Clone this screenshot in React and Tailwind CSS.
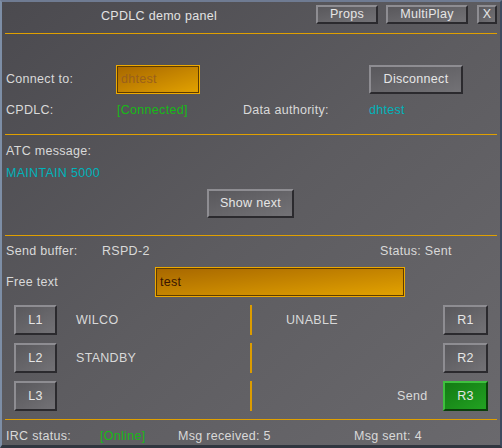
import React from 'react';

const font = { fontFamily: '"Liberation Sans", Arial, sans-serif' };

function Btn({ children, className = '', green = false }) {
  const look = green
    ? 'bg-linear-to-br from-[#137a13] to-[#22a322] border-t-[#3fc03f] border-l-[#3fc03f] border-b-[#0b3f0b] border-r-[#0b3f0b]'
    : 'bg-linear-to-br from-[#59585c] to-[#737276] border-t-[#8e8d92] border-l-[#8e8d92] border-b-[#2b2a2e] border-r-[#2b2a2e]';
  return (
    <div className={`flex items-center justify-center border-2 text-[#e6e6e6] ${look} ${className}`}>
      {children}
    </div>
  );
}

function OrangeField({ children, className = '', textClass = '' }) {
  return (
    <div className={`border border-[#eeaa00] ${className}`}>
      <div className={`h-full w-full flex items-center px-[3px] border border-[#5e3c00] bg-linear-to-br from-[#a86800] to-[#e2a200] ${textClass}`}>
        {children}
      </div>
    </div>
  );
}

function Line() {
  return <div className="h-px ml-[3px] mr-[3px] bg-[#e0a000]" />;
}

function VBar() {
  return <div className="w-[2px] h-[30px] bg-[#dc9c00]" />;
}

export default function App() {
  return (
    <div
      style={font}
      className="w-[502px] h-[448px] overflow-hidden text-[12.5px] tracking-[0.3px] text-[#d9d9d9] border-t-2 border-l-2 border-r-2 border-b-[3px] border-t-[#6f7b92] border-l-[#7d8ea6] border-r-[#3e4a5e] border-b-[#30363f] bg-linear-to-br from-[#4b4a4f] via-[#5d5c60] to-[#6a696d] flex flex-col"
    >
      {/* title bar */}
      <div className="h-[31px] flex items-start">
        <div className="w-[314px] pl-[99px] h-[28px] flex items-center text-[#e2e2e2]">CPDLC demo panel</div>
        <Btn className="mt-[3px] w-[62px] h-[19px]">Props</Btn>
        <Btn className="mt-[3px] ml-[8px] w-[82px] h-[19px]">MultiPlay</Btn>
        <Btn className="mt-[3px] ml-[9px] w-[20px] h-[19px]">X</Btn>
      </div>
      <Line />

      {/* connection */}
      <div className="mt-[31px] h-[29px] flex items-center pl-[4px]">
        <span className="w-[110px]">Connect to:</span>
        <OrangeField className="w-[84px] h-[29px]" textClass="text-[#9a601c]">dhtest</OrangeField>
        <Btn className="ml-[169px] w-[94px] h-[29px]">Disconnect</Btn>
      </div>
      <div className="mt-[9px] h-[14px] flex items-center pl-[4px]">
        <span className="w-[111px]">CPDLC:</span>
        <span className="w-[126px] text-[#17b917]">[Connected]</span>
        <span className="w-[126px]">Data authority:</span>
        <span className="text-[#00b3bb]">dhtest</span>
      </div>
      <div className="mt-[17px]">
        <Line />
      </div>

      {/* atc message */}
      <div className="mt-[9px] h-[14px] flex items-center pl-[4px]">ATC message:</div>
      <div className="mt-[8px] h-[14px] flex items-center pl-[4px] text-[#00b3bb]">MAINTAIN 5000</div>
      <div className="mt-[9px] h-[29px] flex pl-[205px]">
        <Btn className="w-[87px] h-[29px]">Show next</Btn>
      </div>
      <div className="mt-[17px]">
        <Line />
      </div>

      {/* send buffer */}
      <div className="mt-[8px] h-[14px] flex items-center pl-[4px]">
        <span className="w-[96px]">Send buffer:</span>
        <span className="w-[278px]">RSPD-2</span>
        <span>Status: Sent</span>
      </div>
      <div className="mt-[9px] h-[30px] flex items-center pl-[4px]">
        <span className="w-[149px]">Free text</span>
        <OrangeField className="w-[250px] h-[30px]" textClass="text-[#3a1600]">test</OrangeField>
      </div>

      {/* response rows */}
      <div className="mt-[8px] h-[30px] flex items-center pl-[12px]">
        <Btn className="w-[43px] h-[30px]">L1</Btn>
        <span className="ml-[19px] w-[174px]">WILCO</span>
        <VBar />
        <span className="ml-[34px] w-[157px]">UNABLE</span>
        <Btn className="w-[45px] h-[30px]">R1</Btn>
      </div>
      <div className="mt-[8px] h-[30px] flex items-center pl-[12px]">
        <Btn className="w-[43px] h-[30px]">L2</Btn>
        <span className="ml-[19px] w-[174px]">STANDBY</span>
        <VBar />
        <span className="ml-[34px] w-[157px]"></span>
        <Btn className="w-[45px] h-[30px]">R2</Btn>
      </div>
      <div className="mt-[8px] h-[30px] flex items-center pl-[12px]">
        <Btn className="w-[43px] h-[30px]">L3</Btn>
        <span className="ml-[19px] w-[174px]"></span>
        <VBar />
        <span className="ml-[145px] w-[46px]">Send</span>
        <Btn green className="w-[45px] h-[30px]">R3</Btn>
      </div>
      <div className="mt-[8px]">
        <Line />
      </div>

      {/* footer */}
      <div className="mt-[9px] h-[14px] flex items-center pl-[4px]">
        <span className="w-[94px]">IRC status:</span>
        <span className="w-[78px] text-[#17b917]">[Online]</span>
        <span className="w-[176px]">Msg received: 5</span>
        <span>Msg sent: 4</span>
      </div>
    </div>
  );
}
